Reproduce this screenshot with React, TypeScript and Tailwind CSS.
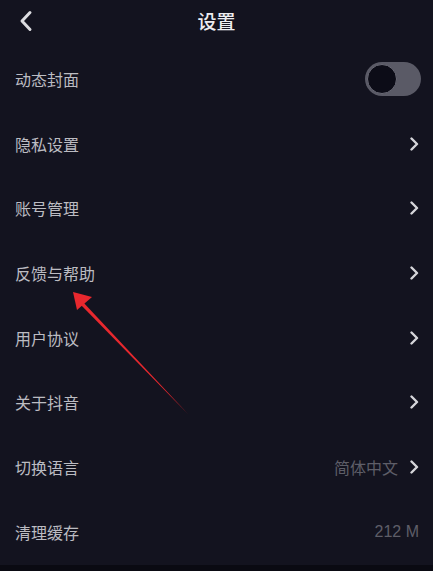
import React from "react";

const font = { fontFamily: '"Noto Sans CJK SC", "Noto Sans", sans-serif' };

function Chevron() {
  return (
    <svg width="10" height="14" viewBox="0 0 10 14" className="shrink-0">
      <path d="M2.5 1.5 L8 7 L2.5 12.5" fill="none" stroke="#d6d6da" strokeWidth="2.4" strokeLinecap="round" strokeLinejoin="round" />
    </svg>
  );
}

function Row({ label, children }: { label: string; children?: React.ReactNode }) {
  return (
    <div className="flex h-[64.7px] items-center justify-between pl-[15px] pr-[14px]">
      <span className="text-[16px] leading-none text-[#bcbcc2]">{label}</span>
      <div className="flex items-center gap-[11px]">{children}</div>
    </div>
  );
}

export default function App() {
  return (
    <div className="relative h-[571px] w-[433px] overflow-hidden bg-[#13131f]" style={font}>
      <div className="relative flex h-[46.6px] items-center justify-center pb-[6px]">
        <svg width="16" height="22" viewBox="0 0 16 22" className="absolute left-[18px] top-[10px]">
          <path d="M12 2.5 L4 11 L12 19.5" fill="none" stroke="#dcdce0" strokeWidth="3" strokeLinecap="round" strokeLinejoin="round" />
        </svg>
        <span className="text-[19px] font-medium leading-none text-[#ececf0]">设置</span>
      </div>
      <Row label="动态封面">
        <div className="flex h-[34px] w-[56px] items-center rounded-full bg-[#5a5a66] px-[2px] mr-[-2px]">
          <div className="h-[30px] w-[30px] rounded-full border-[1.5px] border-[#6a6a76] bg-[#0c0c17]" />
        </div>
      </Row>
      <Row label="隐私设置"><Chevron /></Row>
      <Row label="账号管理"><Chevron /></Row>
      <Row label="反馈与帮助"><Chevron /></Row>
      <Row label="用户协议"><Chevron /></Row>
      <Row label="关于抖音"><Chevron /></Row>
      <Row label="切换语言">
        <span className="text-[16px] leading-none text-[#5e5e68]">简体中文</span>
        <Chevron />
      </Row>
      <Row label="清理缓存">
        <span className="text-[16px] leading-none text-[#5e5e68]" style={{ fontFamily: '"Liberation Sans", sans-serif' }}>212 M</span>
      </Row>
      <div className="absolute bottom-0 left-0 h-[6px] w-full bg-[#0a0a12]" />
      <svg className="pointer-events-none absolute left-0 top-0" width="433" height="571" viewBox="0 0 433 571">
        <path d="M188 414 L82 301 L79.5 303.5 Z" fill="#e8282e" />
        <path d="M73 292 L77 310 L92 297 Z" fill="#e8282e" />
      </svg>
    </div>
  );
}
